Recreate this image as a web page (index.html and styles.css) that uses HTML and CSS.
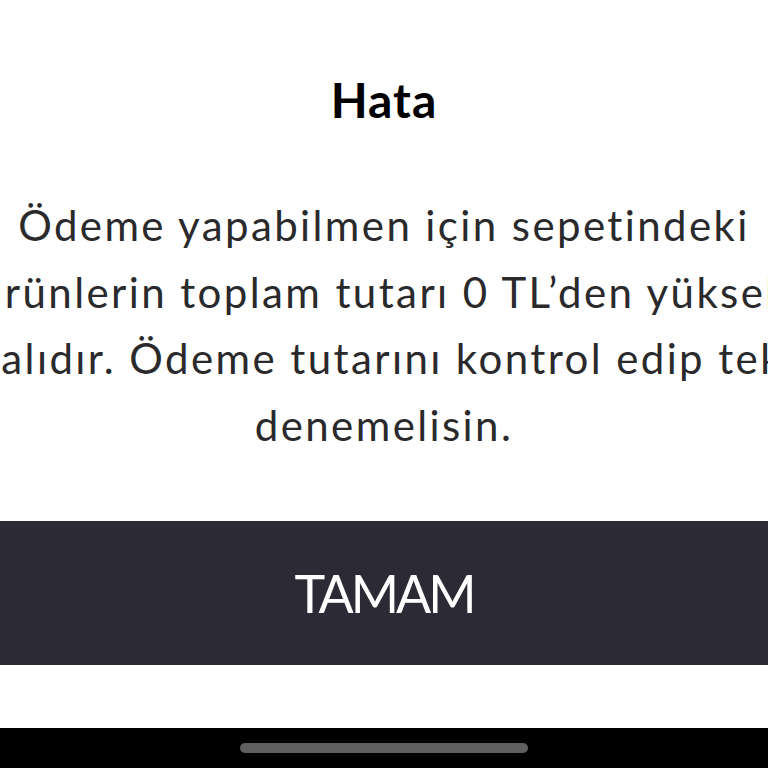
FILE: index.html
```html
<!DOCTYPE html>
<html lang="tr">
<head>
    <meta charset="UTF-8">
    <meta name="viewport" content="width=device-width, initial-scale=1.0">
    <title>Hata</title>
    <link rel="stylesheet" href="styles.css">
</head>
<body>
    <div class="dialog">
        <h1 class="dialog-title">Hata</h1>
        <p class="dialog-text">Ödeme yapabilmen için sepetindeki<br>ürünlerin toplam tutarı 0 TL’den yüksek<br>olmalıdır. Ödeme tutarını kontrol edip tekrar<br>denemelisin.</p>
        <button class="dialog-button" type="button">TAMAM</button>
        <div class="dialog-space"></div>
    </div>
    <div class="home-bar">
        <span class="home-indicator"></span>
    </div>
</body>
</html>
```

FILE: styles.css
```css
body {
  margin: 0;
  padding: 0;
  background: #fff;
  font-family: 'Lato', 'Noto Sans', sans-serif;
  height: 768px;
  overflow: hidden;
  display: flex;
  flex-direction: column;
}

.dialog {
  flex: 1;
  display: flex;
  flex-direction: column;
  align-items: center;
  overflow: hidden;
}

.dialog-title {
  margin: 70px 0 0;
  font-size: 48px;
  line-height: 60px;
  font-weight: 700;
  letter-spacing: 1px;
  color: #000;
}

.dialog-text {
  margin: 62px 0 0;
  font-size: 42px;
  line-height: 66.7px;
  letter-spacing: 2.4px;
  color: #2a2a2c;
  text-align: center;
  white-space: nowrap;
}

.dialog-button {
  margin-top: 62px;
  width: 100%;
  height: 144px;
  border: none;
  background: #2c2b35;
  color: #fff;
  font-family: inherit;
  font-size: 52px;
  font-weight: 400;
  letter-spacing: -3px;
  padding: 0;
}

.dialog-space {
  flex: 1;
  width: 100%;
}

.home-bar {
  height: 40px;
  background: #000;
  display: flex;
  justify-content: center;
  align-items: center;
}

.home-indicator {
  width: 288px;
  height: 10px;
  border-radius: 5px;
  background: #5f5f5f;
}
```
